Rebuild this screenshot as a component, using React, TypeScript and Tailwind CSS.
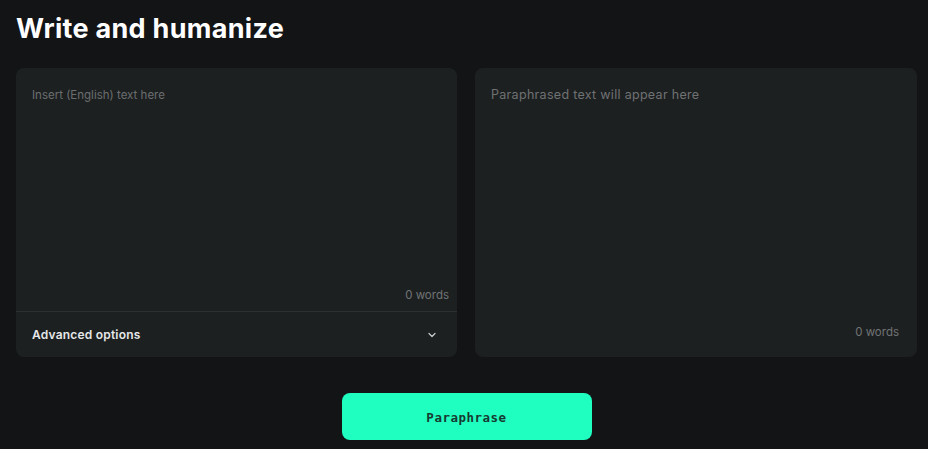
import { ChevronDown } from "lucide-react";

export default function App() {
  return (
    <div
      className="w-[928px] h-[449px] bg-[#121416] pl-4 pr-[11px] pt-[12px] overflow-hidden"
      style={{ fontFamily: "Inter, 'Noto Sans', sans-serif" }}
    >
      <h1 className="text-[27px] leading-[34px] font-bold text-white tracking-[0.3px]">
        Write and humanize
      </h1>

      <div className="mt-[22px] flex gap-[18px]">
        {/* input panel */}
        <div className="w-[441px] shrink-0 h-[289px] rounded-lg bg-[#1d2021] flex flex-col">
          <div className="flex-1 flex flex-col pl-4 pr-2 pt-[19px] pb-[7px]">
            <textarea
              placeholder="Insert (English) text here"
              className="flex-1 resize-none bg-transparent outline-none text-[11.5px] text-[#8a8d8e] placeholder:text-[#6b6e6f]"
            />
            <div className="text-right text-[11.5px] text-[#717475]">0 words</div>
          </div>
          <div className="border-t border-[#2c3031] h-[46px] flex items-center justify-between pl-4 pr-[19px]">
            <span className="text-[12px] font-semibold text-[#e6e7e8] tracking-[0.2px]">Advanced options</span>
            <ChevronDown size={12} strokeWidth={2.5} className="text-[#c8cacb]" />
          </div>
        </div>

        {/* output panel */}
        <div className="w-[442px] shrink-0 h-[289px] rounded-lg bg-[#1d2021] flex flex-col pl-4 pr-[18px] pt-[18px] pb-[16px]">
          <div className="flex-1 text-[12.5px] tracking-[0.3px] text-[#6f7273]">Paraphrased text will appear here</div>
          <div className="text-right text-[11.5px] text-[#717475]">0 words</div>
        </div>
      </div>

      <div className="flex justify-center mt-[36px]">
        <button
          className="w-[250px] h-[47px] rounded-lg bg-[#1effc0] text-[#173a31] text-[12.5px] font-semibold tracking-[0.5px] pt-[3px]"
          style={{ fontFamily: "'DejaVu Sans Mono', 'Liberation Mono', monospace" }}
        >
          Paraphrase
        </button>
      </div>
    </div>
  );
}
